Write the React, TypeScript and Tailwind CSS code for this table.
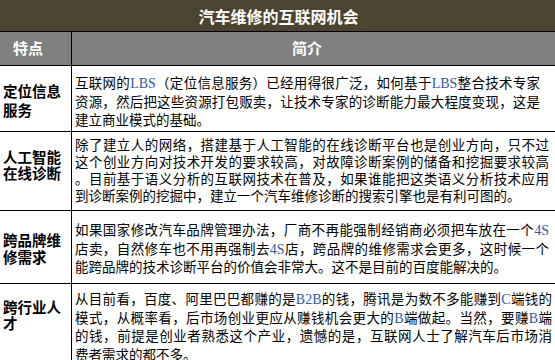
import React from 'react';

interface RowData {
  title: string[];
  lines: string[];
  rowClass: string;
  leftClass: string;
  titleLineClass: string;
  rightClass: string;
  lineClass: string;
}

const rows: RowData[] = [
  {
    title: ['定位信息', '服务'],
    lines: [
      '互联网的LBS（定位信息服务）已经用得很广泛，如何基于LBS整合技术专家',
      '资源，然后把这些资源打包贩卖，让技术专家的诊断能力最大程度变现，这是',
      '建立商业模式的基础。',
    ],
    rowClass: 'h-[66px]',
    leftClass: 'pt-[15px]',
    titleLineClass: 'h-[19px] leading-[19px]',
    rightClass: 'pt-[7px] pr-[15px]',
    lineClass: 'h-[18.5px] leading-[18.5px]',
  },
  {
    title: ['人工智能', '在线诊断'],
    lines: [
      '除了建立人的网络，搭建基于人工智能的在线诊断平台也是创业方向，只不过',
      '这个创业方向对技术开发的要求较高，对故障诊断案例的储备和挖掘要求较高',
      '。目前基于语义分析的互联网技术在普及，如果谁能把这类语义分析技术应用',
      '到诊断案例的挖掘中，建立一个汽车维修诊断的搜索引擎也是有利可图的。',
    ],
    rowClass: 'h-[79px]',
    leftClass: 'pt-[17px]',
    titleLineClass: 'h-[16px] leading-[16px]',
    rightClass: 'pt-[4px] pr-[6px]',
    lineClass: 'h-[17px] leading-[17px]',
  },
  {
    title: ['跨品牌维', '修需求'],
    lines: [
      '如果国家修改汽车品牌管理办法，厂商不再能强制经销商必须把车放在一个4S',
      '店卖，自然修车也不用再强制去4S店，跨品牌的维修需求会更多，这时候一个',
      '能跨品牌的技术诊断平台的价值会非常大。这不是目前的百度能解决的。',
    ],
    rowClass: 'h-[73px]',
    leftClass: 'pt-[20px]',
    titleLineClass: 'h-[17px] leading-[17px]',
    rightClass: 'pt-[9px] pr-[6px]',
    lineClass: 'h-[18.5px] leading-[18.5px]',
  },
  {
    title: ['跨行业人', '才'],
    lines: [
      '从目前看，百度、阿里巴巴都赚的是B2B的钱，腾讯是为数不多能赚到C端钱的',
      '模式，从概率看，后市场创业更应从赚钱机会更大的B端做起。当然，要赚B端',
      '的钱，前提是创业者熟悉这个产业，遗憾的是，互联网人士了解汽车后市场消',
      '费者需求的都不多。',
    ],
    rowClass: 'h-[83px]',
    leftClass: 'pt-[15px]',
    titleLineClass: 'h-[16px] leading-[16px]',
    rightClass: 'pt-[5px] pr-[3px]',
    lineClass: 'h-[18.5px] leading-[18.5px]',
  },
];

// latin bits (LBS, 4S, B2B...) are set in a serif face, tinted blue
const renderLine = (text: string) =>
  text.split(/([A-Za-z0-9]+)/).map((part, i) =>
    /^[A-Za-z0-9]+$/.test(part) ? (
      <span key={i} className="font-['Liberation_Serif',serif] text-[14px] leading-none text-[#3159a4]">
        {part}
      </span>
    ) : (
      <span key={i}>{part}</span>
    )
  );

const App: React.FC = () => {
  return (
    <div className="w-[555px] h-[360px] overflow-hidden bg-white font-['Noto_Sans_CJK_SC',sans-serif] text-black">
      {/* Title bar */}
      <div className="h-[32px] bg-[#4b4431] border-b border-black flex items-center justify-center">
        <span className="text-[16px] font-bold text-white leading-none pl-[2px]">汽车维修的互联网机会</span>
      </div>

      {/* Column headers */}
      <div className="h-[34px] bg-[#808080] border-b border-black flex">
        <div className="w-[72px] shrink-0 border-r border-black flex items-center pl-[13px]">
          <span className="text-[15px] font-bold text-white">特点</span>
        </div>
        <div className="flex-1 flex items-center pl-[220px]">
          <span className="text-[15px] font-bold text-white">简介</span>
        </div>
      </div>

      {/* Body rows */}
      {rows.map((row, idx) => (
        <div key={idx} className={`flex border-b border-black ${row.rowClass}`}>
          <div className={`w-[72px] shrink-0 border-r border-black pl-[3px] text-[14.5px] font-bold ${row.leftClass}`}>
            {row.title.map((t, i) => (
              <div key={i} className={row.titleLineClass}>{t}</div>
            ))}
          </div>
          <div className={`flex-1 min-w-0 pl-[3px] text-[13.5px] ${row.rightClass}`}>
            {row.lines.map((line, i) => (
              <div
                key={i}
                className={`${row.lineClass} ${
                  i < row.lines.length - 1 ? 'text-justify [text-align-last:justify]' : 'text-left'
                }`}
              >
                {renderLine(line)}
              </div>
            ))}
          </div>
        </div>
      ))}
    </div>
  );
};

export default App;
